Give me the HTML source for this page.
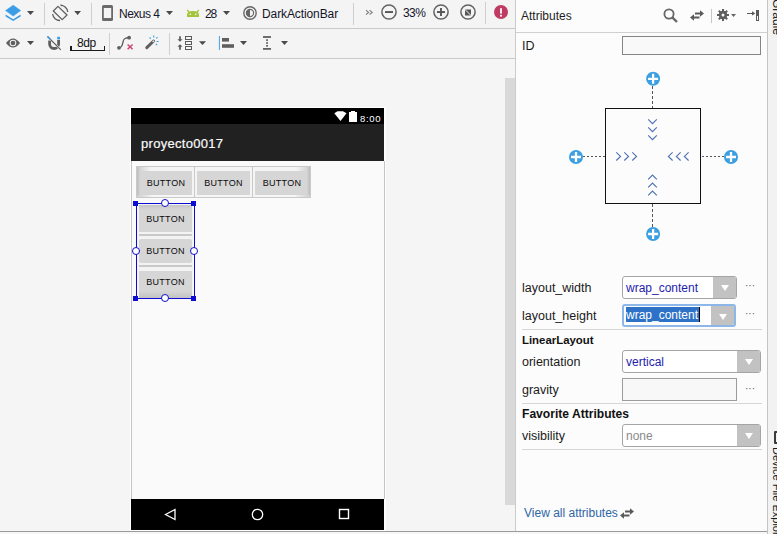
<!DOCTYPE html>
<html><head><meta charset="utf-8">
<style>
*{margin:0;padding:0;box-sizing:border-box}
html,body{width:777px;height:534px;overflow:hidden;background:#f4f4f4;font-family:"Liberation Sans",sans-serif;color:#1e1e1e}
.a{position:absolute}
.t{position:absolute;white-space:nowrap;font-size:12px;line-height:14px}
svg{position:absolute;overflow:visible}
.sep{position:absolute;width:1px;background:#cfcfcf}
.arr{position:absolute;width:0;height:0;border-left:3.5px solid transparent;border-right:3.5px solid transparent;border-top:4px solid #555}
.btn{position:absolute;background:#d6d6d6;font-size:9px;line-height:10px;text-align:center;color:#0a0a0a;letter-spacing:0.3px}
.lbl{position:absolute;white-space:nowrap;font-size:12.5px;line-height:14px;left:522px;color:#1a1a1a}
.combo{position:absolute;left:622px;height:23px;border:1px solid #a5a5a5;border-radius:3px;background:#fff;overflow:hidden}
.combo .cb{position:absolute;right:0;top:0;bottom:0;width:23px;background:#c2c2c2}
.combo .cb:after{content:"";position:absolute;left:8px;top:8px;border-left:4px solid transparent;border-right:4px solid transparent;border-top:6px solid #fff}
.combo .tx{position:absolute;left:3px;top:4px;font-size:12px;line-height:14px;color:#1d1dad;white-space:nowrap}
.dots{position:absolute;left:745px;font-size:10px;line-height:10px;color:#555;letter-spacing:0px}
.hsep{position:absolute;left:522px;width:240px;height:1px;background:#d6d6d6}
</style></head><body>

<!-- toolbar rows -->
<div class="a" style="left:0;top:0;width:515px;height:28px;background:#f4f4f4"></div>
<div class="a" style="left:0;top:28px;width:515px;height:1px;background:#c9c9c9"></div>
<div class="a" style="left:0;top:29px;width:515px;height:29px;background:#f4f4f4"></div>
<div class="a" style="left:0;top:58px;width:515px;height:1px;background:#c9c9c9"></div>
<!-- canvas -->
<div class="a" style="left:0;top:59px;width:515px;height:472px;background:#f5f5f5"></div>
<!-- canvas scrollbar -->
<div class="a" style="left:505px;top:78px;width:10px;height:427px;background:#d9d9d9"></div>
<!-- bottom line -->
<div class="a" style="left:0;top:531px;width:767px;height:1px;background:#9a9a9a"></div>
<div class="a" style="left:0;top:532px;width:767px;height:2px;background:#f7f7f7"></div>

<!-- panel divider -->
<div class="a" style="left:515px;top:0;width:1px;height:531px;background:#cbcbcb"></div>
<!-- attributes panel -->
<div class="a" style="left:516px;top:0;width:251px;height:531px;background:#fcfcfc"></div>
<div class="a" style="left:516px;top:32px;width:251px;height:1px;background:#d0d0d0"></div>
<div class="a" style="left:767px;top:0;width:1px;height:534px;background:#c4c4c4"></div>
<div class="a" style="left:768px;top:0;width:9px;height:534px;background:#f2f2f2"></div>

<!-- ===== Toolbar row 1 ===== -->
<!-- layers icon -->
<svg style="left:0;top:0" width="40" height="28" viewBox="0 0 40 28">
 <path d="M13.2 5.2 L20.6 10.6 L13.2 16 L5.6 10.6Z" fill="#3a9de6" stroke="#3a9de6" stroke-width="0.6" stroke-linejoin="round"/>
 <path d="M5.6 14.6 L13.2 19.2 L20.6 14.6 L20.6 16.4 L13.2 21 L5.6 16.4Z" fill="#3a9de6"/>
 <path d="M27 11 L34 11 L30.5 15Z" fill="#4a4a4a"/>
</svg>
<div class="sep" style="left:44px;top:3px;height:22px"></div>
<!-- rotate icon -->
<svg style="left:48px;top:0" width="40" height="28" viewBox="0 0 40 28">
 <path d="M5.3 11 L10 6.4 L19 15 L14.2 19.6Z" fill="none" stroke="#5f5f5f" stroke-width="1.3" stroke-linejoin="round"/>
 <path d="M12.6 5.2 A7.7 7.7 0 0 1 19.8 12" fill="none" stroke="#5f5f5f" stroke-width="1.3"/>
 <path d="M12 20.6 A7.7 7.7 0 0 1 4.6 14" fill="none" stroke="#5f5f5f" stroke-width="1.3"/>
 <path d="M12.4 4.6 L15 5.2 L13 6.6Z M11.8 21.2 L9.4 20.6 L11.4 19.2Z" fill="#5f5f5f"/>
 <path d="M26.2 11 L33 11 L29.6 15Z" fill="#4a4a4a"/>
</svg>
<div class="sep" style="left:91px;top:3px;height:22px"></div>
<!-- phone icon -->
<svg style="left:102px;top:5px" width="11" height="16" viewBox="0 0 11 16">
 <rect x="0" y="0" width="11" height="16" rx="1.6" fill="#6a6a6a"/>
 <rect x="1.8" y="3" width="7.4" height="10" fill="#f4f4f4"/>
</svg>
<div class="t" style="left:119px;top:7px;font-size:12px;letter-spacing:-0.5px;color:#14142a">Nexus 4</div>
<svg style="left:160px;top:0" width="20" height="28" viewBox="0 0 20 28"><path d="M6 11 L13 11 L9.5 15Z" fill="#4a4a4a"/></svg>
<!-- android icon -->
<svg style="left:186px;top:9px" width="14" height="9" viewBox="0 0 14 9">
 <path d="M1 8 L1 6 Q1 2 7 2 Q13 2 13 6 L13 8Z" fill="#a4c439"/>
 <path d="M1.2 1 L3 3 M12.8 1 L11 3" stroke="#a4c439" stroke-width="1.3"/>
 <rect x="3.6" y="4.6" width="1.4" height="1.4" fill="#f4f4f4"/><rect x="9" y="4.6" width="1.4" height="1.4" fill="#f4f4f4"/>
</svg>
<div class="t" style="left:205px;top:7px;font-size:12px;letter-spacing:-1.2px;color:#14142a">28</div>
<svg style="left:218px;top:0" width="20" height="28" viewBox="0 0 20 28"><path d="M5 11 L12 11 L8.5 15Z" fill="#4a4a4a"/></svg>
<!-- theme icon -->
<svg style="left:243px;top:6px" width="14" height="14" viewBox="0 0 14 14">
 <circle cx="7" cy="7" r="6.2" fill="none" stroke="#666" stroke-width="1.4"/>
 <circle cx="7" cy="7" r="3.6" fill="none" stroke="#666" stroke-width="1.2"/>
 <path d="M7 3.4 A3.6 3.6 0 0 0 7 10.6Z" fill="#666"/>
</svg>
<div class="t" style="left:262px;top:7px;font-size:12px;letter-spacing:-0.1px;color:#14142a">DarkActionBar</div>
<div class="sep" style="left:353px;top:3px;height:22px"></div>
<svg style="left:360px;top:0" width="20" height="28" viewBox="0 0 20 28"><path d="M6 10.3 L8.6 12.4 L6 14.5 M9.6 10.3 L12.2 12.4 L9.6 14.5" fill="none" stroke="#808080" stroke-width="1.1"/></svg>
<!-- zoom out -->
<svg style="left:381px;top:4px" width="16" height="16" viewBox="0 0 16 16">
 <circle cx="8" cy="8" r="7.1" fill="none" stroke="#636363" stroke-width="1.5"/>
 <rect x="4" y="7.1" width="8" height="1.9" fill="#555"/>
</svg>
<div class="t" style="left:403px;top:6px;font-size:12px;letter-spacing:-0.6px;color:#14142a">33%</div>
<!-- zoom in -->
<svg style="left:433px;top:4px" width="16" height="16" viewBox="0 0 16 16">
 <circle cx="8" cy="8" r="7.1" fill="none" stroke="#636363" stroke-width="1.5"/>
 <rect x="4" y="7.1" width="8" height="1.9" fill="#555"/><rect x="7.05" y="4" width="1.9" height="8" fill="#555"/>
</svg>
<!-- fit -->
<svg style="left:460px;top:4px" width="16" height="16" viewBox="0 0 16 16">
 <circle cx="8" cy="8" r="7.1" fill="none" stroke="#636363" stroke-width="1.5"/>
 <rect x="5" y="5.5" width="6" height="6" fill="#555"/>
 <path d="M5 5.5 L11 11.5" stroke="#f4f4f4" stroke-width="1"/>
</svg>
<div class="sep" style="left:485px;top:2px;height:22px"></div>
<!-- error -->
<svg style="left:494px;top:5px" width="14" height="14" viewBox="0 0 14 14">
 <circle cx="7" cy="7" r="7" fill="#c03b62"/>
 <rect x="6.1" y="3.2" width="1.8" height="5.4" fill="#fff"/><rect x="6.1" y="9.8" width="1.8" height="1.8" fill="#fff"/>
</svg>

<!-- ===== Toolbar row 2 ===== -->
<!-- eye -->
<svg style="left:6px;top:38px" width="14" height="10" viewBox="0 0 14 10">
 <path d="M0 5 Q7 -4 14 5 Q7 14 0 5Z" fill="#5f5f5f"/>
 <circle cx="7" cy="5" r="3.3" fill="#f4f4f4"/><circle cx="7" cy="5" r="2.3" fill="#5f5f5f"/>
</svg>
<svg style="left:20px;top:30px" width="20" height="28" viewBox="0 0 20 28"><path d="M7 11 L14 11 L10.5 15Z" fill="#4a4a4a"/></svg>
<!-- magnet -->
<svg style="left:46px;top:35px" width="16" height="16" viewBox="0 0 16 16">
 <path d="M3.6 5.5 L3.6 9 A4.5 4.5 0 0 0 12.6 9 L12.6 5" fill="none" stroke="#5f5f5f" stroke-width="2.8"/>
 <rect x="11.2" y="1.8" width="2.8" height="2.6" fill="#3a9de6"/>
 <path d="M0.5 0.5 L15.5 15.5" stroke="#f4f4f4" stroke-width="2"/>
 <path d="M1.5 1.5 L14.8 14.8" stroke="#5f5f5f" stroke-width="1.2"/>
 <path d="M1.5 1.5 L4.8 4.8" stroke="#3a9de6" stroke-width="1.3"/>
</svg>
<div class="t" style="left:77px;top:36px;font-size:12px;letter-spacing:-0.4px;color:#111">8dp</div>
<div class="a" style="left:70px;top:49.5px;width:35px;height:1.5px;background:#1a1a1a"></div>
<div class="a" style="left:70px;top:45.5px;width:1.5px;height:5.5px;background:#1a1a1a"></div>
<div class="a" style="left:103.5px;top:45.5px;width:1.5px;height:5.5px;background:#1a1a1a"></div>
<div class="sep" style="left:109px;top:33px;height:22px"></div>
<!-- path x -->
<svg style="left:112px;top:30px" width="24" height="24" viewBox="0 0 24 24">
 <path d="M7 17.8 C10 17.8 10.5 15 11 12 C11.5 9 12.5 7.7 17 7.7" fill="none" stroke="#5f5f5f" stroke-width="1.4"/>
 <circle cx="7" cy="17.8" r="1.9" fill="#5f5f5f"/><circle cx="17.1" cy="7.7" r="1.9" fill="#5f5f5f"/>
 <path d="M15.6 14.5 L20.6 19.3 M20.6 14.5 L15.6 19.3" stroke="#cc4670" stroke-width="1.5"/>
</svg>
<!-- wand -->
<svg style="left:140px;top:30px" width="24" height="24" viewBox="0 0 24 24">
 <path d="M6.8 17.6 L13.6 11" stroke="#5f5f5f" stroke-width="3" stroke-linecap="round"/>
 <path d="M12.6 12 L14 10.6" stroke="#d8d8d8" stroke-width="1.6"/>
 <path d="M13.7 5.6 L13.7 7.6 M9.6 7.5 L10.8 8.7 M17.5 7.2 L16.3 8.4 M16.6 11.5 L18.6 11.5 M15.8 13.8 L17 15" stroke="#3a9de6" stroke-width="1.1"/>
</svg>
<div class="sep" style="left:169px;top:33px;height:22px"></div>
<!-- distribute -->
<svg style="left:172px;top:30px" width="24" height="24" viewBox="0 0 24 24">
 <path d="M8 6.2 L8 10" stroke="#5f5f5f" stroke-width="1.8"/><path d="M5.4 9.2 L10.6 9.2 L8 11.8Z" fill="#5f5f5f"/>
 <path d="M8 19.7 L8 16" stroke="#5f5f5f" stroke-width="1.8"/><path d="M5.4 16.8 L10.6 16.8 L8 14.2Z" fill="#5f5f5f"/>
 <rect x="13.5" y="6.5" width="6" height="3" fill="none" stroke="#5a5a5a" stroke-width="1"/>
 <rect x="13.5" y="11.5" width="6" height="3" fill="none" stroke="#5a5a5a" stroke-width="1"/>
 <rect x="13.5" y="16.5" width="6" height="3" fill="none" stroke="#5a5a5a" stroke-width="1"/>
</svg>
<svg style="left:193px;top:30px" width="20" height="28" viewBox="0 0 20 28"><path d="M6 11.2 L13 11.2 L9.5 15Z" fill="#4a4a4a"/></svg>
<!-- align -->
<svg style="left:218px;top:36px" width="17" height="14" viewBox="0 0 17 14">
 <rect x="0.9" y="0" width="1" height="14" fill="#48a2e6"/>
 <rect x="4" y="2" width="7" height="3.6" fill="#5f5f5f"/>
 <rect x="4" y="8.2" width="12" height="3.6" fill="#5f5f5f"/>
</svg>
<svg style="left:234px;top:30px" width="20" height="28" viewBox="0 0 20 28"><path d="M6 11 L13 11 L9.5 15Z" fill="#4a4a4a"/></svg>
<!-- margin -->
<svg style="left:262px;top:36px" width="10" height="14" viewBox="0 0 10 14">
 <rect x="1" y="0.2" width="8" height="1.6" fill="#4f4f4f"/>
 <rect x="1" y="12.1" width="8" height="1.6" fill="#4f4f4f"/>
 <rect x="4.2" y="3.3" width="1.7" height="1.6" fill="#4f4f4f"/>
 <rect x="4.2" y="6.2" width="1.7" height="1.6" fill="#4f4f4f"/>
 <rect x="4.2" y="9" width="1.7" height="1.6" fill="#4f4f4f"/>
</svg>
<svg style="left:275px;top:30px" width="20" height="28" viewBox="0 0 20 28"><path d="M6 11 L13 11 L9.5 15Z" fill="#4a4a4a"/></svg>

<!-- ===== Phone ===== -->
<div class="a" style="left:130px;top:107px;width:256px;height:424px;background:#ffffff"></div>
<div class="a" style="left:131px;top:108px;width:253px;height:16px;background:#000"></div>
<div class="a" style="left:131px;top:124px;width:253px;height:37px;background:#212121"></div>
<div class="a" style="left:131px;top:161px;width:254px;height:338px;background:#fafafa;border-left:1px solid #c4c4c4;border-right:1px solid #c4c4c4"></div>
<div class="a" style="left:131px;top:499px;width:253px;height:31px;background:#000"></div>

<!-- status icons -->
<svg style="left:334px;top:111px" width="13" height="10" viewBox="0 0 13 10"><path d="M0.3 2.3 L3.5 0.3 L9 0.3 L12.5 2.3 L6.5 10Z" fill="#fff"/></svg>
<div class="a" style="left:349px;top:112px;width:8px;height:10px;background:#fff"></div>
<div class="a" style="left:351px;top:111px;width:4px;height:1px;background:#fff"></div>
<div class="t" style="left:360px;top:114px;font-size:9.5px;line-height:10px;color:#fff;letter-spacing:0.7px">8:00</div>
<div class="t" style="left:141px;top:136px;font-size:13px;line-height:15px;color:#fafafa;letter-spacing:0.3px;-webkit-text-stroke:0.2px #fafafa">proyecto0017</div>
<!-- nav icons -->
<svg style="left:164px;top:508px" width="13" height="13" viewBox="0 0 13 13"><path d="M1.5 6.5 L11 1.5 L11 11.5Z" fill="none" stroke="#fff" stroke-width="1.3"/></svg>
<svg style="left:251px;top:508px" width="13" height="13" viewBox="0 0 13 13"><circle cx="6.5" cy="6.5" r="5.2" fill="none" stroke="#fff" stroke-width="1.3"/></svg>
<svg style="left:338px;top:508px" width="12" height="12" viewBox="0 0 12 12"><rect x="1.5" y="1.5" width="9" height="9" fill="none" stroke="#fff" stroke-width="1.4"/></svg>

<!-- horizontal buttons row -->
<div class="a" style="left:136px;top:166px;width:175px;height:32px;background:#f5f5f5;border:1px solid #c9c9c9"></div>
<div class="a" style="left:137px;top:167px;width:14px;height:4px;background:linear-gradient(to right,#cccccc,#f5f5f5)"></div>
<div class="a" style="left:296px;top:167px;width:14px;height:4px;background:linear-gradient(to left,#cccccc,#f5f5f5)"></div>
<div class="a" style="left:137px;top:167px;width:3px;height:30px;background:linear-gradient(to right,#bdbdbd,#d3d3d3)"></div>
<div class="a" style="left:307px;top:167px;width:3px;height:30px;background:linear-gradient(to left,#bdbdbd,#d3d3d3)"></div>
<div class="a" style="left:137px;top:195px;width:14px;height:2px;background:linear-gradient(to right,#d0d0d0,#f0f0f0)"></div>
<div class="a" style="left:296px;top:195px;width:14px;height:2px;background:linear-gradient(to left,#d0d0d0,#f0f0f0)"></div>
<div class="a" style="left:194px;top:166px;width:1px;height:32px;background:#c9c9c9"></div>
<div class="a" style="left:252px;top:166px;width:1px;height:32px;background:#c9c9c9"></div>
<div class="btn" style="left:140px;top:171px;width:52px;height:24px;padding-top:7px">BUTTON</div>
<div class="btn" style="left:197px;top:171px;width:53px;height:24px;padding-top:7px">BUTTON</div>
<div class="btn" style="left:255px;top:171px;width:52px;height:24px;padding-top:7px;padding-left:2px">BUTTON</div>
<!-- vertical buttons -->
<div class="a" style="left:137px;top:204px;width:56px;height:94px;background:#f3f3f3"></div>
<div class="btn" style="left:139px;top:205px;width:53px;height:27px;padding-top:9px;background:linear-gradient(to bottom,#c6c6c6 0,#d6d6d6 5px)">BUTTON</div>
<div class="a" style="left:139px;top:234px;width:53px;height:2px;background:#c9c9c9"></div>
<div class="btn" style="left:139px;top:239px;width:53px;height:24px;padding-top:7px;border-radius:2px">BUTTON</div>
<div class="a" style="left:139px;top:265px;width:53px;height:2px;background:#c9c9c9"></div>
<div class="btn" style="left:139px;top:271px;width:53px;height:27px;padding-top:6px;background:linear-gradient(to bottom,#d6d6d6 0,#d6d6d6 20px,#c2c2c2 27px)">BUTTON</div>
<!-- selection -->
<div class="a" style="left:136px;top:203px;width:59px;height:96px;border:1px solid #0c0cd2"></div>
<div class="a" style="left:133px;top:201px;width:5px;height:5px;background:#0c0cd2"></div>
<div class="a" style="left:191px;top:201px;width:5px;height:5px;background:#0c0cd2"></div>
<div class="a" style="left:133px;top:296px;width:5px;height:5px;background:#0c0cd2"></div>
<div class="a" style="left:191px;top:296px;width:5px;height:5px;background:#0c0cd2"></div>
<div class="a" style="left:161px;top:199px;width:8px;height:8px;border-radius:50%;background:#fff;border:1.3px solid #0c0cd2"></div>
<div class="a" style="left:161px;top:294px;width:8px;height:8px;border-radius:50%;background:#fff;border:1.3px solid #0c0cd2"></div>
<div class="a" style="left:132px;top:247px;width:8px;height:8px;border-radius:50%;background:#fff;border:1.3px solid #0c0cd2"></div>
<div class="a" style="left:190px;top:247px;width:8px;height:8px;border-radius:50%;background:#fff;border:1.3px solid #0c0cd2"></div>

<!-- ===== Attributes panel ===== -->
<div class="t" style="left:521px;top:9px">Attributes</div>
<!-- search -->
<svg style="left:663px;top:8px" width="15" height="15" viewBox="0 0 15 15">
 <circle cx="6" cy="6" r="4.6" fill="none" stroke="#666" stroke-width="1.8"/>
 <path d="M9.3 9.3 L14 14" stroke="#666" stroke-width="2.4"/>
</svg>
<!-- swap -->
<svg style="left:690px;top:10px" width="14" height="11" viewBox="0 0 14 11">
 <path d="M5 3.5 L10.5 3.5" stroke="#5a5a5a" stroke-width="2"/><path d="M10 0.3 L14 3.5 L10 6.7Z" fill="#5a5a5a"/>
 <path d="M3.5 7.5 L9.5 7.5" stroke="#5a5a5a" stroke-width="2"/><path d="M4 4.3 L0 7.5 L4 10.7Z" fill="#5a5a5a"/>
</svg>
<div class="sep" style="left:711px;top:9px;height:14px;background:#c8c8c8"></div>
<!-- gear -->
<svg style="left:717px;top:9px" width="12" height="12" viewBox="0 0 12 12">
 <circle cx="6" cy="6" r="4.2" fill="#5e5e5e"/>
 <path d="M6 0 L6 12 M0 6 L12 6 M1.8 1.8 L10.2 10.2 M10.2 1.8 L1.8 10.2" stroke="#5e5e5e" stroke-width="2"/>
 <circle cx="6" cy="6" r="1.5" fill="#f7f7f7"/>
</svg>
<svg style="left:712px;top:4px" width="28" height="22" viewBox="0 0 28 22"><path d="M19 10 L24 10 L21.5 13Z" fill="#666"/></svg>
<!-- pin -->
<div class="a" style="left:747px;top:12.8px;width:6px;height:1.3px;background:#5a5a5a"></div>
<svg style="left:740px;top:4px" width="26" height="24" viewBox="0 0 26 24"><path d="M12 7.3 L15.3 9.4 L12 11.6Z" fill="#5a5a5a"/></svg>
<div class="a" style="left:756px;top:10px;width:3px;height:11px;background:#5a5a5a"></div>
<div class="a" style="left:757px;top:16px;width:1px;height:4px;background:#fcfcfc"></div>

<div class="lbl" style="top:39px">ID</div>
<div class="a" style="left:622px;top:36px;width:139px;height:19px;border:1px solid #858585;background:#f9f9f9"></div>

<!-- constraint widget -->
<div class="a" style="left:605px;top:108px;width:96px;height:96px;border:1px solid #111"></div>
<svg style="left:560px;top:60px" width="190" height="190" viewBox="0 0 190 190">
 <g stroke="#555" stroke-width="1">
  <path d="M92.5 26 L92.5 48" stroke-dasharray="3 2"/><path d="M92.5 144 L92.5 167" stroke-dasharray="3 2"/>
 </g>
 <g stroke="#555" stroke-width="1">
  <path d="M23 96.5 L45 96.5" stroke-dasharray="2 2"/><path d="M142 96.5 L164 96.5" stroke-dasharray="2 2"/>
 </g>
 <g fill="#3b9fe2">
  <circle cx="93.1" cy="18.8" r="7"/><circle cx="93.1" cy="174" r="7"/>
  <circle cx="16" cy="97" r="7"/><circle cx="171" cy="97" r="7"/>
 </g>
 <g stroke="#fff" stroke-width="2.3">
  <path d="M93.1 13.8 L93.1 23.8 M88.1 18.8 L98.1 18.8"/>
  <path d="M93.1 169 L93.1 179 M88.1 174 L98.1 174"/>
  <path d="M16 92 L16 102 M11 97 L21 97"/>
  <path d="M171 92 L171 102 M166 97 L176 97"/>
 </g>
 <g fill="none" stroke="#4b72b2" stroke-width="1.15">
  <path d="M88.2 59.3 L92.5 63.6 L96.8 59.3 M88.2 67.3 L92.5 71.6 L96.8 67.3 M88.2 75.3 L92.5 79.6 L96.8 75.3"/>
  <path d="M88.2 119.4 L92.5 115.1 L96.8 119.4 M88.2 127.4 L92.5 123.1 L96.8 127.4 M88.2 135.4 L92.5 131.1 L96.8 135.4"/>
  <path d="M56.3 92.3 L60.5 96.4 L56.3 100.5 M64.3 92.3 L68.5 96.4 L64.3 100.5 M72.3 92.3 L76.5 96.4 L72.3 100.5"/>
  <path d="M112.6 92.3 L108.4 96.4 L112.6 100.5 M120.6 92.3 L116.4 96.4 L120.6 100.5 M128.6 92.3 L124.4 96.4 L128.6 100.5"/>
 </g>
</svg>

<div class="lbl" style="top:281px">layout_width</div>
<div class="combo" style="top:276px;width:115px"><div class="tx">wrap_content</div><div class="cb"></div></div>
<div class="dots" style="top:281px">&#183;&#183;&#183;</div>
<div class="lbl" style="top:309px">layout_height</div>
<div class="combo" style="top:304px;width:114px;border:2px solid #8cb7e8"><div class="tx" style="left:2px;top:1px;background:#2d72c6;color:#fff;height:15px;padding-top:1px;padding-right:1px;border-right:1px solid #000">wrap_content</div><div class="cb"></div></div>
<div class="dots" style="top:309px">&#183;&#183;&#183;</div>
<div class="hsep" style="top:329px"></div>
<div class="lbl" style="top:333px;font-weight:bold;font-size:11.4px;color:#111">LinearLayout</div>
<div class="lbl" style="top:355px">orientation</div>
<div class="combo" style="top:350px;width:139px"><div class="tx">vertical</div><div class="cb"></div></div>
<div class="lbl" style="top:383px">gravity</div>
<div class="a" style="left:622px;top:378px;width:115px;height:23px;border:1px solid #9c9c9c;background:#f8f8f8"></div>
<div class="dots" style="top:384px">&#183;&#183;&#183;</div>
<div class="hsep" style="top:403px"></div>
<div class="lbl" style="top:407px;font-weight:bold;font-size:12.1px;color:#111">Favorite Attributes</div>
<div class="lbl" style="top:429px">visibility</div>
<div class="combo" style="top:424px;width:139px"><div class="tx" style="color:#8a8a8a">none</div><div class="cb"></div></div>
<div class="hsep" style="top:449px"></div>

<div class="t" style="left:524px;top:506px;color:#2f66a6">View all attributes</div>
<svg style="left:620px;top:508px" width="14" height="11" viewBox="0 0 14 11">
 <path d="M5 3.5 L10.5 3.5" stroke="#5a5a5a" stroke-width="2"/><path d="M10 0.3 L14 3.5 L10 6.7Z" fill="#5a5a5a"/>
 <path d="M3.5 7.5 L9.5 7.5" stroke="#5a5a5a" stroke-width="2"/><path d="M4 4.3 L0 7.5 L4 10.7Z" fill="#5a5a5a"/>
</svg>

<!-- right strip vertical texts -->
<div class="t" style="left:0;top:0;font-size:12px;line-height:12px;color:#222;transform-origin:0 0;transform:translate(783px,-1px) rotate(90deg)">Gradle</div>
<div class="a" style="left:774px;top:431px;width:9px;height:13px;border:2px solid #3a3a3a;border-radius:1px"></div>
<div class="t" style="left:0;top:0;font-size:11px;line-height:12px;color:#1a1a1a;transform-origin:0 0;transform:translate(783px,447px) rotate(90deg)">Device File Explorer</div>

</body></html>
